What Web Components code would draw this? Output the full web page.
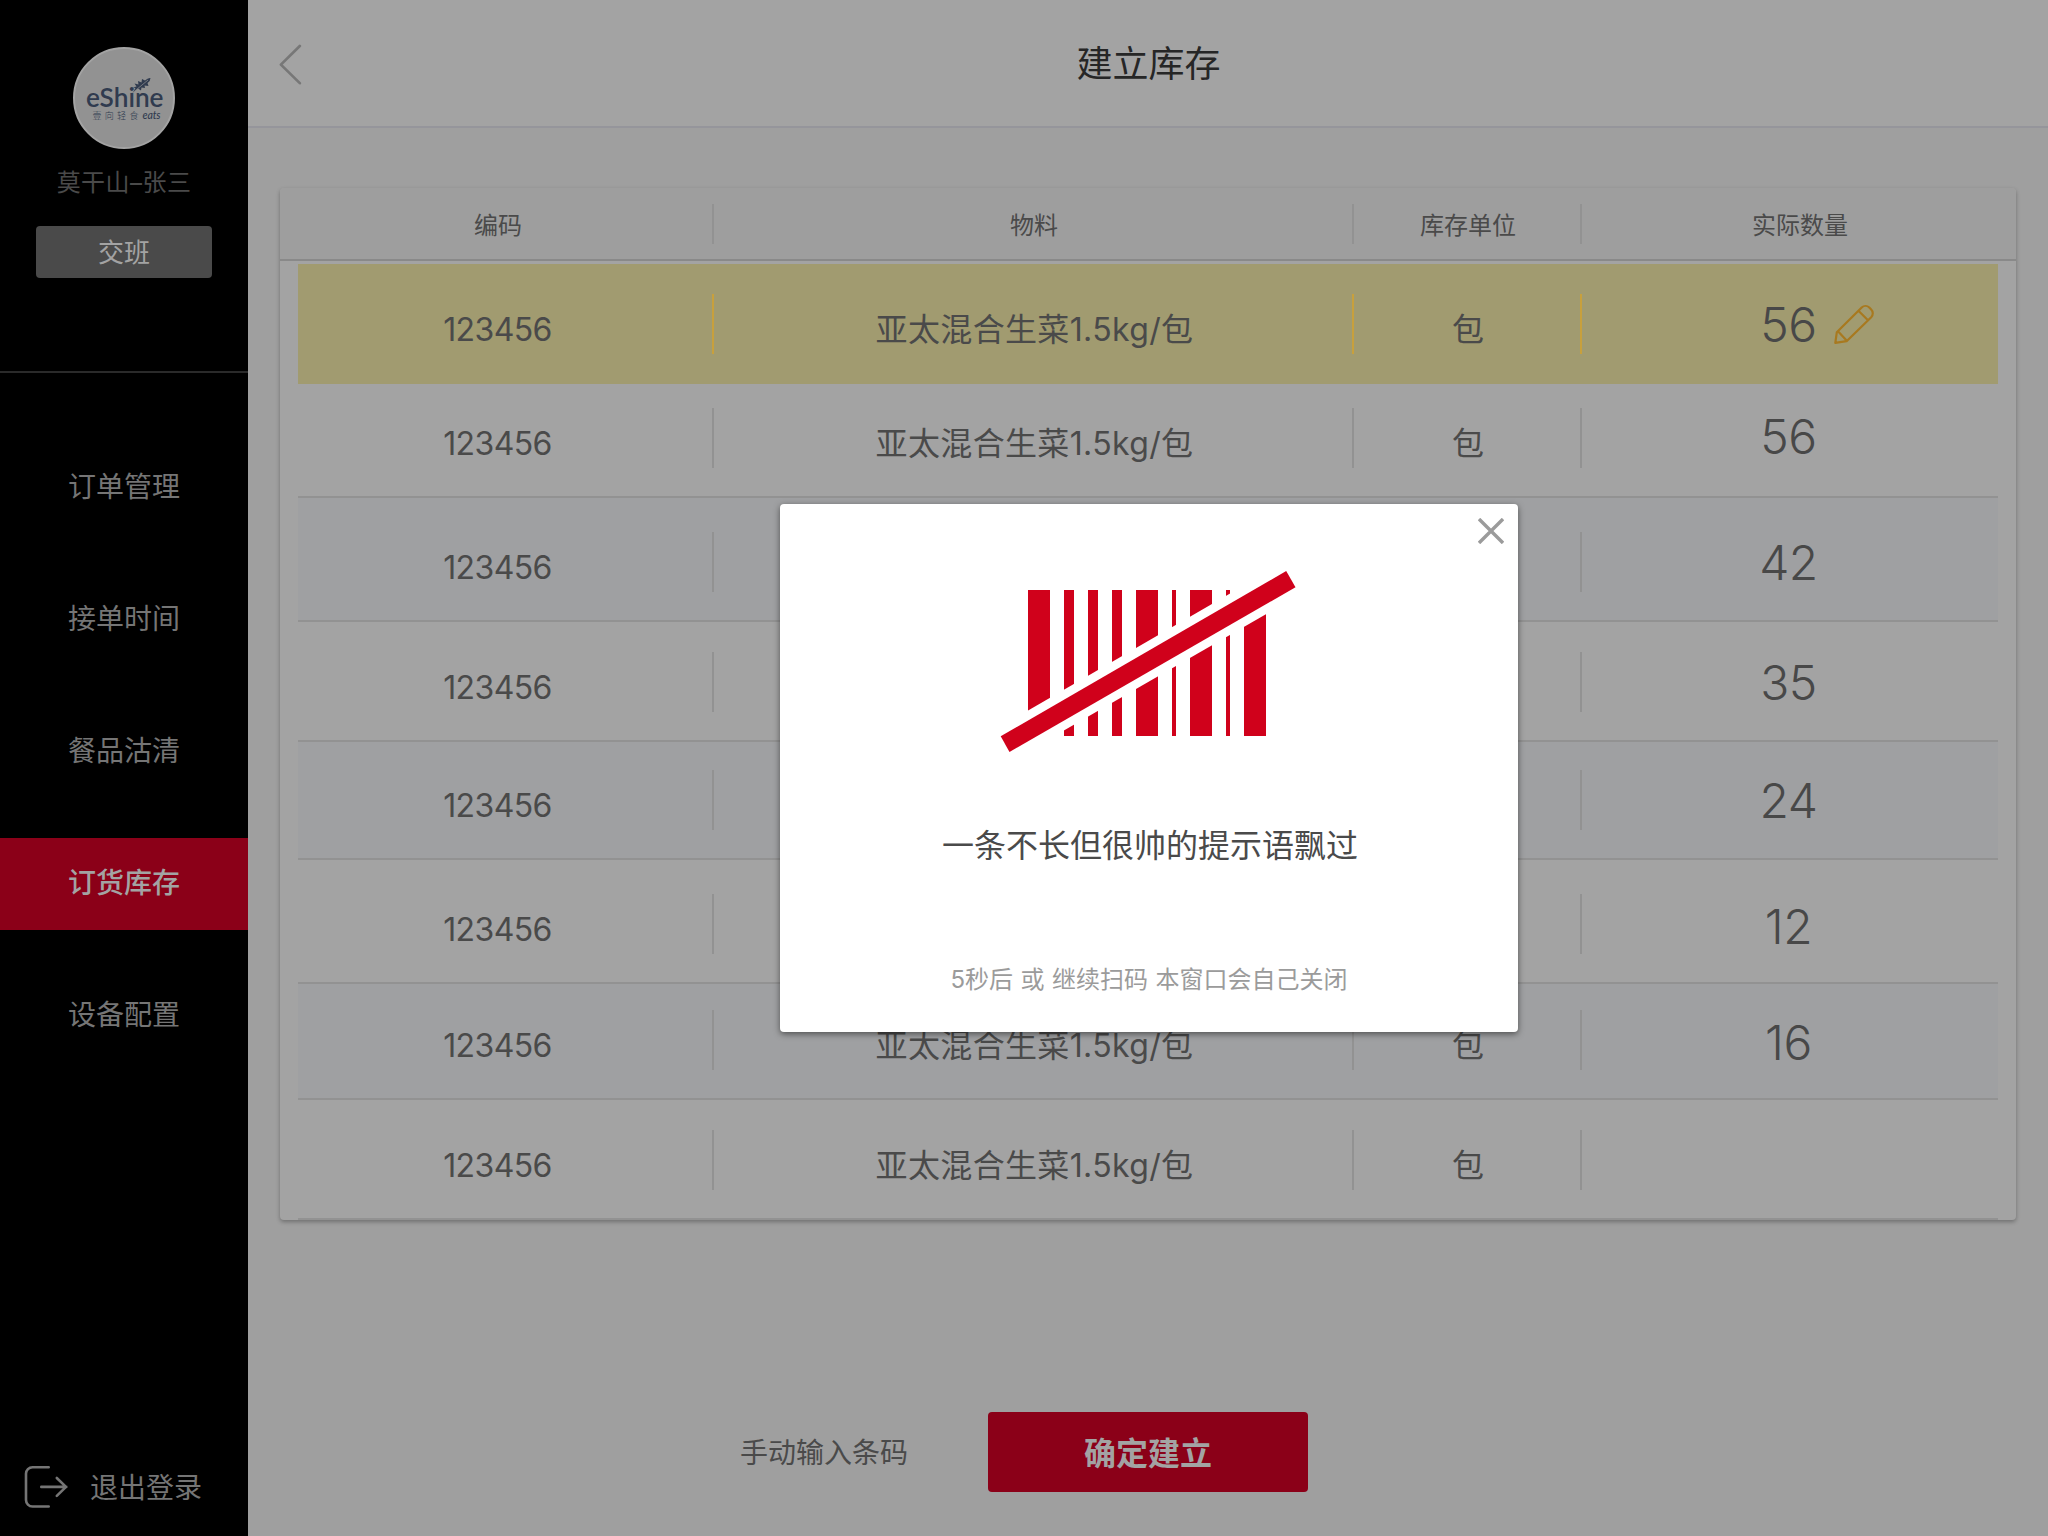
<!DOCTYPE html>
<html lang="zh-CN">
<head>
<meta charset="utf-8">
<title>建立库存</title>
<style>
html,body{margin:0;height:100%}
body{font-family:Inter,"Noto Sans CJK SC",sans-serif;width:2048px;height:1536px;overflow:hidden;background:#9f9f9f;color:#4a4a4a}
</style>
</head>
<body>
<stock-app></stock-app>
<script>
function define(name, html, setup) {
  const t = document.createElement('template');
  t.innerHTML = html;
  customElements.define(name, class extends HTMLElement {
    constructor() {
      super();
      this.attachShadow({mode: 'open'}).appendChild(t.content.cloneNode(true));
    }
    connectedCallback() { if (setup) setup(this, this.shadowRoot); }
  });
}

define('brand-logo', `
<style>:host{display:block;width:102px;height:102px}svg{display:block}</style>
<svg width="102" height="102" viewBox="0 0 102 102">
  <circle cx="51" cy="51" r="50" fill="#929292" stroke="#a3a3a3" stroke-width="2"/>
  <text x="13" y="59.500" textLength="77.5" lengthAdjust="spacingAndGlyphs" font-family="Lato,sans-serif" font-weight="600" font-size="27" fill="#303b4f">eShine</text>
  <path d="M59.500 46 L62.500 41 L60 40.500 L63.500 39.500 L61.500 36.500 L65.500 37.500 L65 34 L68.500 35.500 L69 32 L72 33.500 Q75 30.500 77.500 31 Q77.500 34 74.500 36 L75.500 39 L71.500 38.500 L72 41 L68.500 40.500 L68 43.500 L65 41.500 Z" fill="#303b4f"/>
  <path d="M60 45.500 L75 33" stroke="#929292" stroke-width=".7"/>
  <g font-family="Noto Sans CJK SC,sans-serif" font-weight="300" font-size="9" fill="#303b4f">
    <text x="19.500" y="72" letter-spacing="3.300">壹向轻食</text>
    <text x="69.500" y="71.500" font-family="Lato,sans-serif" font-style="italic" font-weight="500" font-size="10.500" letter-spacing="0" textLength="18">eats</text>
  </g>
</svg>`);

define('nav-item', `
<style>
:host{display:flex;height:92px;align-items:center;justify-content:center;box-sizing:border-box;padding-bottom:2px;font-size:28px;line-height:40px;color:#757575}
:host([active]){background:#8b0018;color:#a3a3a3;font-weight:500}
</style><slot></slot>`);

define('side-bar', `
<style>
:host{display:flex;flex-direction:column;width:248px;height:1536px;background:#000;flex:none}
.user{display:flex;flex-direction:column;align-items:center;border-bottom:2px solid #2a2a2a;padding-top:47px;height:324px}
.name{margin-top:16px;font-size:24px;line-height:36px;color:#4a4a4a;letter-spacing:.45px}
.shift{margin-top:25px;width:176px;height:52px;border-radius:4px;background:#4a4a4a;color:#a3a3a3;font-size:26px;line-height:54px;text-align:center}
nav{display:flex;flex-direction:column;gap:40px;margin-top:69px}
.out{margin-top:auto;display:flex;align-items:center;height:44px;padding:0 0 27px 24px;gap:22px;font-size:28px;color:#757575}
.out span{padding-bottom:3px}
svg{display:block}
</style>
<div class="user"><brand-logo></brand-logo><div class="name">莫干山–张三</div><div class="shift">交班</div></div>
<nav><nav-item>订单管理</nav-item><nav-item>接单时间</nav-item><nav-item>餐品沽清</nav-item><nav-item active>订货库存</nav-item><nav-item>设备配置</nav-item></nav>
<div class="out">
<svg width="44" height="44" viewBox="0 0 44 44" fill="none" stroke="#757575" stroke-width="2.600" stroke-linecap="round" stroke-linejoin="round"><path d="M24.700 2.200H8.500a6.500 6.500 0 0 0-6.500 6.500v26.300a6.500 6.500 0 0 0 6.500 6.500h16.200M17.300 21.900h25M32.800 13l9.200 8.900-9.200 9"/></svg>
<span>退出登录</span></div>`);

define('top-bar', `
<style>
:host{display:grid;grid-template-columns:64px 1fr 64px;align-items:center;height:126px;border-bottom:2px solid #95959b;background:#a3a3a3}
svg{display:block;margin:2px 0 0 30px}
h1{margin:0;padding:2px 0 0 1px;font-size:36px;line-height:50px;font-weight:400;text-align:center;color:#262626}
</style>
<svg width="26" height="42" viewBox="0 0 26 42" fill="none" stroke="#777" stroke-width="2.700" stroke-linecap="round" stroke-linejoin="round"><path d="M22.300 2.500L3.400 21.500l18.900 19" transform="translate(-.5,.5) scale(1,.98)"/></svg>
<h1><slot></slot></h1>`);

define('pencil-icon', `
<style>:host{display:block;width:42px;height:42px}svg{display:block}</style>
<svg width="42" height="42" viewBox="0 0 42 42" fill="none" stroke="#a8791f" stroke-width="2.200" stroke-linejoin="round" stroke-linecap="round"><path d="M2.300 38.800L3.800 28.300 28.700 3.500a5.500 5.500 0 0 1 7.600 0l1.900 2a5.500 5.500 0 0 1 0 7.700L13.600 37.200 2.300 38.800zM5.200 27.600l8.400 9M25.700 7l9.300 9.200"/></svg>`);

/* One line of the stock list; the separators sit 28px above the bottom rule. */
define('stock-row', `
<style>
:host{display:grid;grid-template-columns:414px 2px 638px 2px 226px 2px 416px;align-items:end;box-sizing:border-box;margin:0 18px;padding-bottom:28px;border-bottom:2px solid #929292;font-size:32px;line-height:60px;--sep:#929292}
:host([alt]){background:#9fa0a2}
:host([picked]){background:#a19b70;border-bottom:0;padding-bottom:30px;margin-top:3px;--sep:#c8a03c}
i{height:60px;background:var(--sep)}
div{height:60px;text-align:center;box-sizing:border-box;line-height:72px;white-space:nowrap}
.code{padding-right:15px;letter-spacing:-.6px}
.mat{padding-left:3px}
.mat span{letter-spacing:.35px}
.unit{padding-left:2px}
.qty{display:flex;justify-content:center;align-items:center;font-size:48px;font-weight:350;letter-spacing:-.5px;line-height:60px;padding-right:3px;margin-bottom:calc(0px - var(--dy,0px));color:#484848}
.qty pencil-icon{margin:0 -58px 0 16px}
</style>
<div class="code"></div><i></i><div class="mat"><span></span></div><i></i><div class="unit"></div><i></i><div class="qty"><span></span></div>`, (el, r) => {
  r.querySelector('.code').textContent = el.getAttribute('code') || '';
  r.querySelector('.mat span').textContent = el.getAttribute('material') || '';
  r.querySelector('.unit').textContent = el.getAttribute('unit') || '';
  r.querySelector('.qty span').textContent = el.getAttribute('qty') || '';
  el.style.height = el.getAttribute('h') + 'px';
  el.style.setProperty('--dy', (el.getAttribute('dy') || 0) + 'px');
  if (el.hasAttribute('picked')) r.querySelector('.qty').appendChild(document.createElement('pencil-icon'));
});

define('stock-table', `
<style>
:host{display:block;width:1736px;height:1032px;margin:60px 0 0 32px;border-radius:4px;background:#a3a3a3;box-shadow:0 2px 4px rgba(0,0,0,.3)}
header{display:grid;grid-template-columns:432px 2px 638px 2px 226px 2px 434px;align-items:center;height:71px;border-bottom:2px solid #898989;background:#9e9e9e;border-radius:4px 4px 0 0;font-size:24px;line-height:40px;text-align:center}
header span{padding:5px 0 0 2px}
header span:first-child{padding-left:4px}
i{height:40px;background:#929292;margin-top:1px}
</style>
<header><span>编码</span><i></i><span>物料</span><i></i><span>库存单位</span><i></i><span>实际数量</span></header>
<slot></slot>`);

define('action-bar', `
<style>
:host{display:flex;align-items:center;margin:192px 0 0 492px;gap:80px;font-size:28px}
span{padding-bottom:2px}
button{width:320px;height:80px;border:0;border-radius:4px;background:#8b0018;color:#a3a3a3;font:600 32px/80px Inter,"Noto Sans CJK SC",sans-serif;padding:2px 0 0}
</style><span>手动输入条码</span><button>确定建立</button>`);

define('tip-dialog', `
<style>
:host{position:absolute;left:780px;top:504px;width:738px;height:528px;display:flex;flex-direction:column;align-items:center;background:#fff;border-radius:4px;box-shadow:0 2px 6px rgba(0,0,0,.5)}
.close{align-self:flex-end;margin:14px 14px 0 0}
svg{display:block}
.code{margin:26px 2px 0 0}
p{margin:0;white-space:nowrap}
.msg{margin:70px 0 0 2px;font-size:32px;line-height:44px;color:#4a4a4a}
.note{margin-top:95px;font-size:24px;line-height:34px;color:#9b9b9b;word-spacing:.8px}
</style>
<svg class="close" width="26" height="26" viewBox="0 0 26 26" stroke="#9b9b9b" stroke-width="3.400"><path d="M1 1l24 24M25 1L1 25"/></svg>
<svg class="code" width="298" height="184" viewBox="999 570 298 184">
<path fill="#d0011b" d="M1028 590h22v146h-22zM1064 590h10v146h-10zM1088 590h10v146h-10zM1112 590h10v146h-10zM1136 590h22v146h-22zM1172 590h4v146h-4zM1190 590h22v146h-22zM1226 590h4v146h-4zM1244 590h22v146h-22z"/>
<path fill="#fff" d="M1000.700 726.300L1286.200 561 1295.500 597.100 1009.500 761.800 1000 761z"/>
<path fill="#d0011b" d="M1000.700 736.300L1286.200 571 1295.500 587.300 1009.500 752z"/>
</svg>
<p class="msg">一条不长但很帅的提示语飘过</p>
<p class="note">5秒后 或 继续扫码 本窗口会自己关闭</p>`);

define('stock-app', `
<style>
:host{display:flex;width:2048px;height:1536px;position:relative}
main{flex:1;display:flex;flex-direction:column}
</style>
<side-bar></side-bar>
<main>
<top-bar>建立库存</top-bar>
<stock-table>
<stock-row picked h="120" dy="1" code="123456" material="亚太混合生菜1.5kg/包" unit="包" qty="56"></stock-row>
<stock-row h="114" dy="-1" code="123456" material="亚太混合生菜1.5kg/包" unit="包" qty="56"></stock-row>
<stock-row alt h="124" dy="1" code="123456" qty="42"></stock-row>
<stock-row h="120" dy="1" code="123456" qty="35"></stock-row>
<stock-row alt h="118" dy="1" code="123456" qty="24"></stock-row>
<stock-row h="124" dy="3" code="123456" qty="12"></stock-row>
<stock-row alt h="116" dy="3" code="123456" material="亚太混合生菜1.5kg/包" unit="包" qty="16"></stock-row>
<stock-row h="120" code="123456" material="亚太混合生菜1.5kg/包" unit="包"></stock-row>
</stock-table>
<action-bar></action-bar>
</main>
<tip-dialog></tip-dialog>`);
</script>
</body>
</html>
